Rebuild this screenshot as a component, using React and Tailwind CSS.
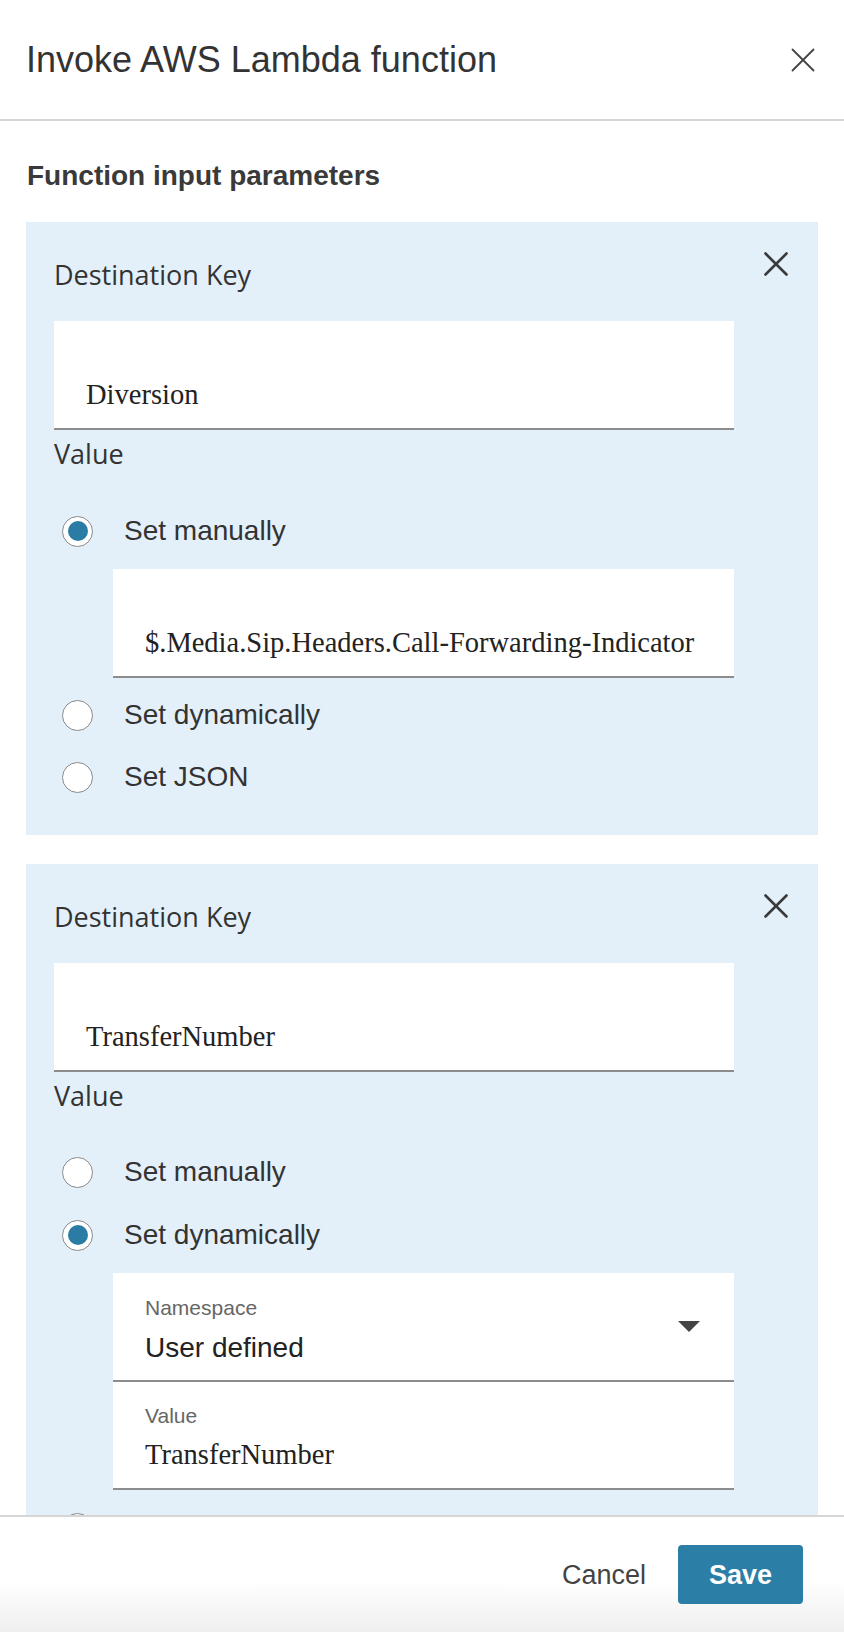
import React from 'react';

const labelFont = "font-['Open_Sans','Noto_Sans',sans-serif]";
const serifFont = "font-['Liberation_Serif','Times_New_Roman',serif]";

function CloseIcon({ size = 24, width = 2.4, color = '#333' }) {
    return (
        <svg width={size} height={size} viewBox="0 0 24 24" fill="none" stroke={color} strokeWidth={width} strokeLinecap="round">
            <line x1="1.5" y1="1.5" x2="22.5" y2="22.5" />
            <line x1="22.5" y1="1.5" x2="1.5" y2="22.5" />
        </svg>
    );
}

function Radio({ checked, label, className = '' }) {
    return (
        <div className={`flex items-center h-[32px] pl-[8px] gap-[31px] ${className}`}>
            <span className="w-[31px] h-[31px] rounded-full border border-[#8a8a8a] bg-white flex items-center justify-center shrink-0">
                {checked && <span className="w-[20px] h-[20px] rounded-full bg-[#2b7ca5]"></span>}
            </span>
            <span className="text-[28px] leading-[32px] text-[#333]">{label}</span>
        </div>
    );
}

function TextField({ value, className = '' }) {
    return (
        <div className={`bg-white h-[109px] border-b-2 border-[#8c8c8c] pl-[32px] pt-[58px] ${className}`}>
            <div className={`${serifFont} text-[28.5px] leading-[32px] text-[#222] whitespace-nowrap`}>{value}</div>
        </div>
    );
}

function Label({ children, className = '' }) {
    return <div className={`${labelFont} text-[27px] leading-[32px] text-[#333] ${className}`}>{children}</div>;
}

function Panel({ children }) {
    return (
        <div className="bg-[#e3f0fa] flex gap-[30px] pl-[28px] pr-[30px] pt-[30px] pb-[42px]">
            <div className="w-[680px] pt-[7px] flex flex-col">{children}</div>
            <CloseIcon size={24} width={2.6} color="#3a3a3a" />
        </div>
    );
}

export default function App() {
    return (
        <div className="h-[1632px] w-[844px] flex flex-col bg-white overflow-hidden font-['Liberation_Sans',Arial,sans-serif] text-[#333]">
            {/* Header */}
            <header className="h-[121px] shrink-0 border-b-2 border-[#d6d6d6] flex items-center justify-between pl-[26px] pr-[29px]">
                <h1 className="text-[36px] leading-[36px] text-[#333]">Invoke AWS Lambda function</h1>
                <CloseIcon size={24} width={1.8} color="#444" />
            </header>

            {/* Scrollable body */}
            <main className="flex-1 min-h-0 overflow-hidden px-[26px] pt-[39px]">
                <h2 className="text-[28px] leading-[32px] font-bold text-[#3a3a3a] pl-[1px]">Function input parameters</h2>

                <div className="mt-[30px] flex flex-col gap-[29px]">
                    <Panel>
                        <Label>Destination Key</Label>
                        <TextField value="Diversion" className="mt-[30px]" />
                        <Label className="mt-[8px]">Value</Label>
                        <Radio checked label="Set manually" className="mt-[45px]" />
                        <TextField value="$.Media.Sip.Headers.Call-Forwarding-Indicator" className="mt-[22px] ml-[59px]" />
                        <Radio label="Set dynamically" className="mt-[21px]" />
                        <Radio label="Set JSON" className="mt-[30px]" />
                    </Panel>

                    <Panel>
                        <Label>Destination Key</Label>
                        <TextField value="TransferNumber" className="mt-[30px]" />
                        <Label className="mt-[8px]">Value</Label>
                        <Radio label="Set manually" className="mt-[44px]" />
                        <Radio checked label="Set dynamically" className="mt-[31px]" />

                        <div className="mt-[22px] ml-[59px] bg-white">
                            <div className="h-[109px] border-b-2 border-[#8c8c8c] flex pl-[32px] pr-[34px]">
                                <div className="flex-1 pt-[23px]">
                                    <div className="text-[21px] leading-[24px] text-[#666]">Namespace</div>
                                    <div className="mt-[12px] text-[28px] leading-[32px] text-[#222]">User defined</div>
                                </div>
                                <svg className="self-center" width="22" height="11" viewBox="0 0 22 11">
                                    <polygon points="0,0 22,0 11,11" fill="#444" />
                                </svg>
                            </div>
                            <div className="h-[108px] border-b-2 border-[#8c8c8c] pl-[32px] pt-[22px]">
                                <div className="text-[21px] leading-[24px] text-[#666]">Value</div>
                                <div className={`${serifFont} mt-[11px] text-[28.5px] leading-[32px] text-[#222]`}>TransferNumber</div>
                            </div>
                        </div>

                        <Radio label="Set JSON" className="mt-[22px]" />
                    </Panel>
                </div>
            </main>

            {/* Footer */}
            <footer className="h-[117px] shrink-0 border-t-2 border-[#d6d6d6] bg-gradient-to-b from-white from-55% to-[#efefef] flex items-center justify-end gap-[32px] pr-[41px]">
                <button className="text-[27px] leading-[32px] text-[#444]">Cancel</button>
                <button className="w-[125px] h-[59px] rounded-[4px] bg-[#2b7ea5] text-white text-[27px] font-bold leading-[32px]">Save</button>
            </footer>
        </div>
    );
}
